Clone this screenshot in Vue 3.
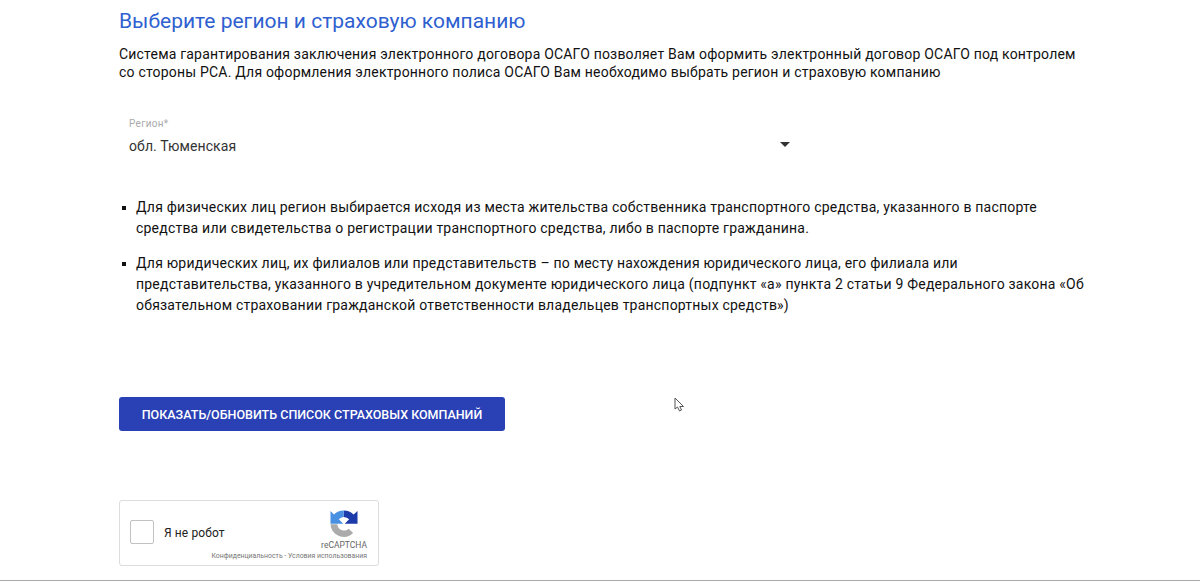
<template>
    <div class="page">
        <div class="content">
            <h2 class="title">Выберите регион и страховую компанию</h2>
            <p class="intro">
                Система гарантирования заключения электронного договора ОСАГО позволяет Вам оформить электронный договор ОСАГО под контролем
                со стороны РСА. Для оформления электронного полиса ОСАГО Вам необходимо выбрать регион и страховую компанию
            </p>

            <div class="select">
                <div class="select-label">Регион*</div>
                <div class="select-row">
                    <span class="select-value">{{ region }}</span>
                    <span class="select-arrow"></span>
                </div>
            </div>

            <ul class="rules">
                <li v-for="rule in rules" :key="rule">{{ rule }}</li>
            </ul>

            <button class="btn-primary">Показать/обновить список страховых компаний</button>

            <div class="captcha">
                <div class="captcha-box"></div>
                <div class="captcha-text">Я не робот</div>
                <div class="captcha-logo">
                    <svg width="28" height="28" viewBox="0 0 28.5 28.5">
                        <path d="M14 0.5 A14 14 0 0 1 24 4.5 L28 1 V14 H15 L19.5 9.5 A7.5 7.5 0 0 0 14 7 Z" fill="#1c3aa9" />
                        <path d="M14 0.5 A14 14 0 0 0 4 4.5 L0.5 1 V14 H13.5 L9 9.5 A7 7 0 0 1 14 7 Z" fill="#4a90e2" />
                        <path d="M0.5 14.5 H7.5 A6.8 6.8 0 0 0 19 19 L23.5 23.5 A13.6 13.6 0 0 1 0.5 14.5 Z" fill="#ababab" />
                    </svg>
                    <div class="captcha-brand">reCAPTCHA</div>
                </div>
                <div class="captcha-links">Конфиденциальность - Условия использования</div>
            </div>
        </div>

        <svg class="cursor" width="12" height="16" viewBox="0 0 12 16">
            <path d="M1 1 V12 L3.5 10 L5.5 14 L7.5 13 L5.8 9.5 H9.5 Z" fill="#fff" stroke="#555" stroke-width="1" />
        </svg>
    </div>
</template>

<script setup>
const region = "обл. Тюменская";
const rules = [
    "Для физических лиц регион выбирается исходя из места жительства собственника транспортного средства, указанного в паспорте средства или свидетельства о регистрации транспортного средства, либо в паспорте гражданина.",
    "Для юридических лиц, их филиалов или представительств – по месту нахождения юридического лица, его филиала или представительства, указанного в учредительном документе юридического лица (подпункт «а» пункта 2 статьи 9 Федерального закона «Об обязательном страховании гражданской ответственности владельцев транспортных средств»)",
];
</script>

<style>
html,
body {
    margin: 0;
    background: #fff;
    overflow: hidden;
}
</style>

<style scoped>
.page {
    position: relative;
    height: 581px;
    box-sizing: border-box;
    border-bottom: 1px solid #aaa;
    overflow: hidden;
    font-family: Roboto, "Liberation Sans", sans-serif;
    color: #111;
}

.content {
    width: 975px;
    margin-left: 119px;
    padding-top: 7px;
}

.title {
    margin: 0;
    font-size: 21px;
    line-height: 28px;
    font-weight: 400;
    color: #2f5fd0;
}

.intro {
    margin: 10px 0 0;
    font-size: 14px;
    line-height: 18px;
    letter-spacing: 0.2px;
}

.select {
    width: 661px;
    margin-top: 37px;
    padding-left: 10px;
}

.select-label {
    font-size: 10px;
    line-height: 12px;
    color: #aaa;
    letter-spacing: 0.3px;
}

.select-row {
    display: flex;
    justify-content: space-between;
    align-items: center;
    margin-top: 5px;
    height: 22px;
}

.select-value {
    font-size: 14px;
    color: #333;
    letter-spacing: 0.1px;
}

.select-arrow {
    width: 0;
    height: 0;
    border-left: 5px solid transparent;
    border-right: 5px solid transparent;
    border-top: 5px solid #333;
    margin-bottom: 3px;
}

.rules {
    list-style: none;
    margin: 40px 0 0;
    padding: 0 0 0 17px;
}

.rules li {
    position: relative;
    font-size: 14px;
    line-height: 21px;
    letter-spacing: 0.21px;
    margin-bottom: 14px;
}

.rules li::before {
    content: "";
    position: absolute;
    left: -14px;
    top: 9px;
    width: 4px;
    height: 4px;
    background: #111;
}

.btn-primary {
    display: block;
    width: 386px;
    height: 34px;
    margin-top: 81px;
    background: #2a40b5;
    color: #fff;
    border: none;
    border-radius: 3px;
    font-family: inherit;
    font-size: 12.5px;
    font-weight: 500;
    text-transform: uppercase;
    cursor: pointer;
}

.captcha {
    position: relative;
    width: 258px;
    height: 64px;
    margin-top: 69px;
    border: 1px solid #dcdcdc;
    border-radius: 3px;
    display: flex;
    align-items: flex-start;
}

.captcha-box {
    width: 22px;
    height: 22px;
    margin: 19px 0 0 10px;
    border: 1px solid #c1c1c1;
    border-radius: 2px;
}

.captcha-text {
    margin: 25px 0 0 10px;
    font-size: 12px;
    line-height: 15px;
    color: #222;
    letter-spacing: 0.1px;
}

.captcha-logo {
    margin: 9px 0 0 auto;
    padding-right: 11px;
    display: flex;
    flex-direction: column;
    align-items: center;
}

.captcha-brand {
    font-size: 8.5px;
    line-height: 10px;
    color: #666;
    margin-top: 2px;
}

.captcha-links {
    position: absolute;
    right: 11px;
    bottom: 5px;
    font-size: 6.9px;
    line-height: 8px;
    color: #777;
    white-space: nowrap;
}

.cursor {
    position: absolute;
    left: 674px;
    top: 397px;
}
</style>
